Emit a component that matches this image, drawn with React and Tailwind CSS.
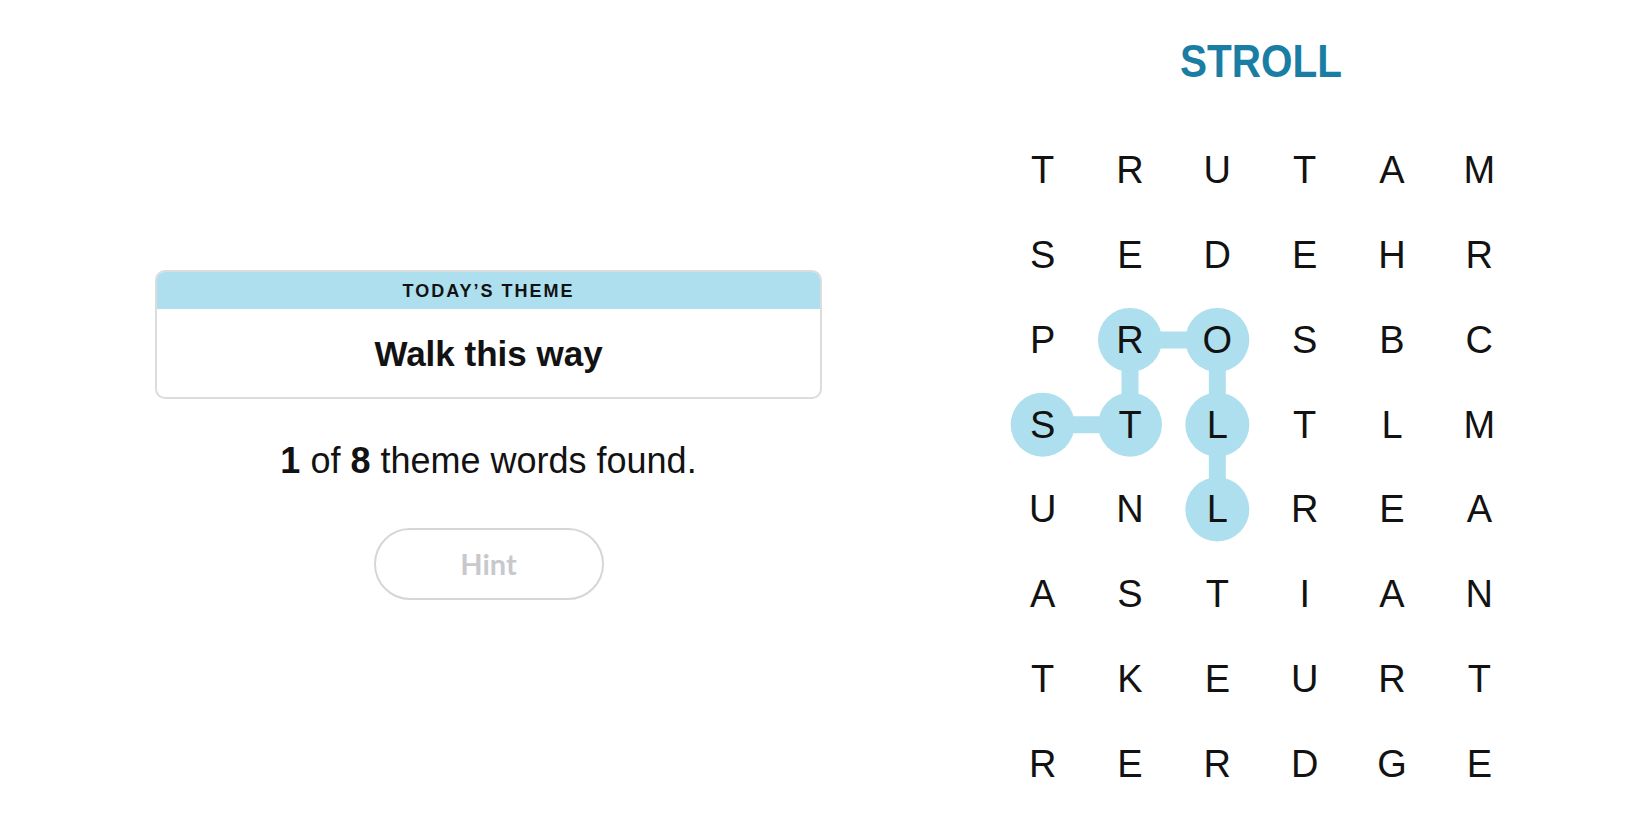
import React from 'react'

const ROWS = ['TRUTAM', 'SEDEHR', 'PROSBC', 'STLTLM', 'UNLREA', 'ASTIAN', 'TKEURT', 'RERDGE']

const CELL_W = 524 / 6
const CELL_H = 678 / 8

// path of the found theme word, row/col
const FOUND = [
  [3, 0],
  [3, 1],
  [2, 1],
  [2, 2],
  [3, 2],
  [4, 2],
]

const center = ([r, c]) => [CELL_W * c + CELL_W / 2, CELL_H * r + CELL_H / 2]

const Highlight = () => (
  <svg className="absolute inset-0" width="524" height="678" viewBox="0 0 524 678">
    {FOUND.slice(1).map((p, i) => {
      const [x1, y1] = center(FOUND[i])
      const [x2, y2] = center(p)
      return <line key={i} x1={x1} y1={y1} x2={x2} y2={y2} stroke="#aedfee" strokeWidth="17" />
    })}
    {FOUND.map((p, i) => {
      const [cx, cy] = center(p)
      return <circle key={i} cx={cx} cy={cy} r="32" fill="#aedfee" />
    })}
  </svg>
)

export default function App() {
  return (
    <div className="w-[1650px] h-[825px] bg-white overflow-hidden flex text-[#121212]" style={{ fontFamily: '"Liberation Sans", Arial, sans-serif' }}>
      {/* Left: theme + progress */}
      <div className="w-[667px] ml-[155px] pt-[270px] flex flex-col items-center">
        <div className="w-full rounded-[10px] border-2 border-[#dcdcdc] overflow-hidden">
          <div className="h-[37px] bg-[#aedfee] flex items-center justify-center">
            <span className="text-[18px] font-bold tracking-[0.11em] leading-none">TODAY’S THEME</span>
          </div>
          <div className="h-[88px] flex items-center justify-center">
            <span className="text-[35px] font-bold leading-none">Walk this way</span>
          </div>
        </div>

        <p className="mt-[44px] text-[36px] leading-none">
          <span className="font-bold">1</span> of <span className="font-bold">8</span> theme words found.
        </p>

        <button
          className="mt-[49px] w-[230px] h-[72px] rounded-full border-2 border-[#d6d6d6] text-[29px] font-bold text-[#c8c8cd] flex items-center justify-center"
          style={{ fontFamily: 'Lato, "Liberation Sans", sans-serif' }}
        >
          Hint
        </button>
      </div>

      {/* Right: puzzle */}
      <div className="ml-[177px] w-[524px] flex flex-col items-center">
        <h1 className="mt-[38px] text-[46px] font-bold leading-none text-[#1a7ea4] scale-x-[0.88]">
          STROLL
        </h1>

        <div className="relative mt-[44px] w-[524px] h-[678px]">
          <Highlight />
          <div className="relative grid grid-cols-6 grid-rows-[repeat(8,84.75px)]">
            {ROWS.map((row, r) =>
              row.split('').map((ch, c) => (
                <div key={`${r}-${c}`} className="flex items-center justify-center text-[38px] leading-none">
                  {ch}
                </div>
              ))
            )}
          </div>
        </div>
      </div>
    </div>
  )
}
